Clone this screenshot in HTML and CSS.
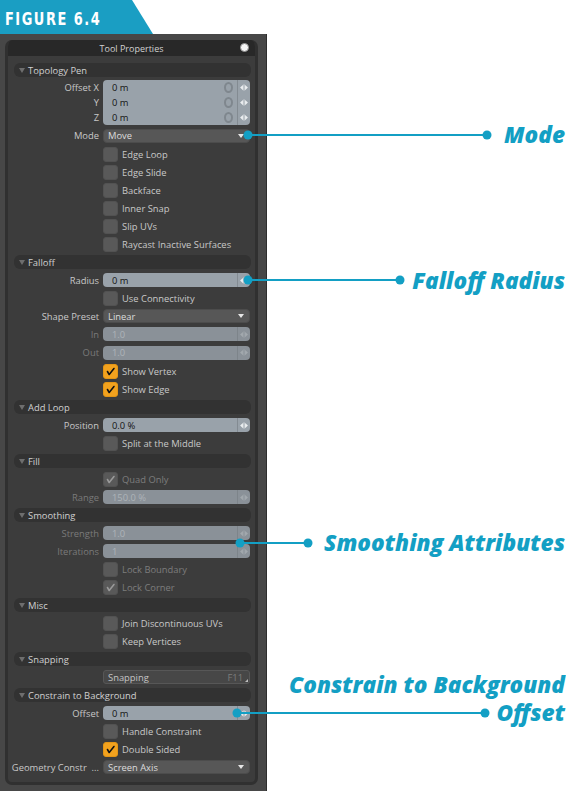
FILE: index.html
```html
<!DOCTYPE html>
<html>
<head>
<meta charset="utf-8">
<title>Figure 6.4 - Tool Properties</title>
<link rel="stylesheet" href="styles.css">
</head>
<body>
<div class="page">
  <div class="col">
    <div class="banner"><span class="fig">FIGURE 6.4</span></div>
    <div class="frame">
      <div class="panel">
        <div class="ph"><span class="ph-title">Tool Properties</span><span class="ph-btn"></span></div>
        <div class="pb">

          <div class="sec"><div class="bar"><i class="tri"></i>Topology Pen</div></div>
          <div class="group">
            <div class="glabels"><div>Offset X</div><div>Y</div><div>Z</div></div>
            <div class="gfield">
              <div class="gline"><span class="val">0 m</span><i class="reset"></i><span class="spin"><svg viewBox="0 0 9 8"><path d="M0 4L3.3 1V7Z M5.7 1L9 4L5.7 7Z"/><rect x="4" y="0.5" width="1" height="7"/></svg></span></div>
              <div class="gline"><span class="val">0 m</span><i class="reset"></i><span class="spin"><svg viewBox="0 0 9 8"><path d="M0 4L3.3 1V7Z M5.7 1L9 4L5.7 7Z"/><rect x="4" y="0.5" width="1" height="7"/></svg></span></div>
              <div class="gline"><span class="val">0 m</span><i class="reset"></i><span class="spin"><svg viewBox="0 0 9 8"><path d="M0 4L3.3 1V7Z M5.7 1L9 4L5.7 7Z"/><rect x="4" y="0.5" width="1" height="7"/></svg></span></div>
            </div>
          </div>
          <div class="row tall"><div class="lbl">Mode</div><div class="fld drop"><span class="dval">Move</span><i class="darr"></i></div></div>
          <div class="row"><div class="lbl"></div><div class="chk"><i class="box"></i>Edge Loop</div></div>
          <div class="row"><div class="lbl"></div><div class="chk"><i class="box"></i>Edge Slide</div></div>
          <div class="row"><div class="lbl"></div><div class="chk"><i class="box"></i>Backface</div></div>
          <div class="row"><div class="lbl"></div><div class="chk"><i class="box"></i>Inner Snap</div></div>
          <div class="row"><div class="lbl"></div><div class="chk"><i class="box"></i>Slip UVs</div></div>
          <div class="row"><div class="lbl"></div><div class="chk"><i class="box"></i>Raycast Inactive Surfaces</div></div>

          <div class="sec"><div class="bar"><i class="tri"></i>Falloff</div></div>
          <div class="row"><div class="lbl">Radius</div><div class="fld num"><span class="val">0 m</span><span class="spin"><svg viewBox="0 0 9 8"><path d="M0 4L3.3 1V7Z M5.7 1L9 4L5.7 7Z"/><rect x="4" y="0.5" width="1" height="7"/></svg></span></div></div>
          <div class="row"><div class="lbl"></div><div class="chk"><i class="box"></i>Use Connectivity</div></div>
          <div class="row"><div class="lbl">Shape Preset</div><div class="fld drop"><span class="dval">Linear</span><i class="darr"></i></div></div>
          <div class="row off"><div class="lbl">In</div><div class="fld num"><span class="val">1.0</span><span class="spin"><svg viewBox="0 0 9 8"><path d="M0 4L3.3 1V7Z M5.7 1L9 4L5.7 7Z"/><rect x="4" y="0.5" width="1" height="7"/></svg></span></div></div>
          <div class="row off tall"><div class="lbl">Out</div><div class="fld num"><span class="val">1.0</span><span class="spin"><svg viewBox="0 0 9 8"><path d="M0 4L3.3 1V7Z M5.7 1L9 4L5.7 7Z"/><rect x="4" y="0.5" width="1" height="7"/></svg></span></div></div>
          <div class="row"><div class="lbl"></div><div class="chk"><i class="box on"><svg viewBox="0 0 15 15"><path d="M4 7.5L6 11L11.5 4"/></svg></i>Show Vertex</div></div>
          <div class="row"><div class="lbl"></div><div class="chk"><i class="box on"><svg viewBox="0 0 15 15"><path d="M4 7.5L6 11L11.5 4"/></svg></i>Show Edge</div></div>

          <div class="sec"><div class="bar"><i class="tri"></i>Add Loop</div></div>
          <div class="row"><div class="lbl">Position</div><div class="fld num"><span class="val">0.0 %</span><span class="spin"><svg viewBox="0 0 9 8"><path d="M0 4L3.3 1V7Z M5.7 1L9 4L5.7 7Z"/><rect x="4" y="0.5" width="1" height="7"/></svg></span></div></div>
          <div class="row"><div class="lbl"></div><div class="chk"><i class="box"></i>Split at the Middle</div></div>

          <div class="sec"><div class="bar"><i class="tri"></i>Fill</div></div>
          <div class="row off"><div class="lbl"></div><div class="chk"><i class="box dim"><svg viewBox="0 0 15 15"><path d="M4 7.5L6 11L11.5 4"/></svg></i>Quad Only</div></div>
          <div class="row off"><div class="lbl">Range</div><div class="fld num"><span class="val">150.0 %</span><span class="spin"><svg viewBox="0 0 9 8"><path d="M0 4L3.3 1V7Z M5.7 1L9 4L5.7 7Z"/><rect x="4" y="0.5" width="1" height="7"/></svg></span></div></div>

          <div class="sec"><div class="bar"><i class="tri"></i>Smoothing</div></div>
          <div class="row off"><div class="lbl">Strength</div><div class="fld num"><span class="val">1.0</span><span class="spin"><svg viewBox="0 0 9 8"><path d="M0 4L3.3 1V7Z M5.7 1L9 4L5.7 7Z"/><rect x="4" y="0.5" width="1" height="7"/></svg></span></div></div>
          <div class="row off"><div class="lbl">Iterations</div><div class="fld num"><span class="val">1</span><span class="spin"><svg viewBox="0 0 9 8"><path d="M0 4L3.3 1V7Z M5.7 1L9 4L5.7 7Z"/><rect x="4" y="0.5" width="1" height="7"/></svg></span></div></div>
          <div class="row off"><div class="lbl"></div><div class="chk"><i class="box"></i>Lock Boundary</div></div>
          <div class="row off"><div class="lbl"></div><div class="chk"><i class="box dim"><svg viewBox="0 0 15 15"><path d="M4 7.5L6 11L11.5 4"/></svg></i>Lock Corner</div></div>

          <div class="sec"><div class="bar"><i class="tri"></i>Misc</div></div>
          <div class="row"><div class="lbl"></div><div class="chk"><i class="box"></i>Join Discontinuous UVs</div></div>
          <div class="row"><div class="lbl"></div><div class="chk"><i class="box"></i>Keep Vertices</div></div>

          <div class="sec"><div class="bar"><i class="tri"></i>Snapping</div></div>
          <div class="row"><div class="lbl"></div><div class="fld btn"><span class="dval">Snapping</span><span class="key">F11</span><i class="corner"></i></div></div>

          <div class="sec"><div class="bar"><i class="tri"></i>Constrain to Background</div></div>
          <div class="row"><div class="lbl">Offset</div><div class="fld num"><span class="val">0 m</span><span class="spin"><svg viewBox="0 0 9 8"><path d="M0 4L3.3 1V7Z M5.7 1L9 4L5.7 7Z"/><rect x="4" y="0.5" width="1" height="7"/></svg></span></div></div>
          <div class="row"><div class="lbl"></div><div class="chk"><i class="box"></i>Handle Constraint</div></div>
          <div class="row"><div class="lbl"></div><div class="chk"><i class="box on"><svg viewBox="0 0 15 15"><path d="M4 7.5L6 11L11.5 4"/></svg></i>Double Sided</div></div>
          <div class="row"><div class="lbl">Geometry Constr&nbsp; ...</div><div class="fld drop"><span class="dval">Screen Axis</span><i class="darr"></i></div></div>

        </div>
      </div>
    </div>
  </div>

  <svg class="callouts" viewBox="0 0 566 791">
    <g class="cl">
      <line x1="248" y1="135" x2="487" y2="135"/>
      <circle cx="248" cy="135" r="4.5"/>
      <circle cx="487" cy="135" r="4.5"/>
      <line x1="248" y1="280" x2="400" y2="280"/>
      <circle cx="248" cy="280" r="4.5"/>
      <circle cx="400" cy="280" r="4.5"/>
      <line x1="240" y1="543" x2="308" y2="543"/>
      <circle cx="240" cy="543" r="4.5"/>
      <circle cx="308" cy="543" r="4.5"/>
      <line x1="237" y1="713" x2="485" y2="713"/>
      <circle cx="237" cy="713" r="4.5"/>
      <circle cx="485" cy="713" r="4.5"/>
    </g>
  </svg>
  <div class="note n-mode">Mode</div>
  <div class="note n-falloff">Falloff Radius</div>
  <div class="note n-smooth">Smoothing Attributes</div>
  <div class="note n-constrain">Constrain to Background</div>
  <div class="note n-offset">Offset</div>
</div>
</body>
</html>
```

FILE: styles.css
```css
html, body {
  margin: 0;
  padding: 0;
  background: #ffffff;
}

.page {
  position: relative;
  width: 566px;
  height: 791px;
  overflow: hidden;
  font-family: "Open Sans", "Noto Sans", sans-serif;
}

.col {
  width: 267px;
  display: flex;
  flex-direction: column;
}

/* banner */
.banner {
  width: 153px;
  height: 34px;
  background: #1a9ec3;
  clip-path: polygon(0 0, 132px 0, 153px 34px, 0 34px);
  display: flex;
  align-items: center;
}
.fig {
  display: inline-block;
  margin-left: 5px;
  margin-top: 3px;
  color: #ffffff;
  font-family: "DejaVu Sans Condensed", "DejaVu Sans", sans-serif;
  font-weight: bold;
  font-size: 18px;
  letter-spacing: 1.9px;
  line-height: 20px;
  transform: scaleX(0.8);
  transform-origin: left center;
}

/* frame & panel */
.frame {
  background: #474747;
  height: 757px;
  padding: 6px 8px 0 5px;
  box-sizing: border-box;
  border-right: 1px solid #2e2e2e;
}
.panel {
  border: 3px solid #303030;
  border-top: 0;
  border-radius: 7px;
  overflow: hidden;
  background: #3c3c3c;
}
.ph {
  height: 16px;
  background: #282828;
  display: flex;
  align-items: center;
  justify-content: center;
  position: relative;
  margin: 0 -3px;
}
.ph-title {
  color: #d2d2d2;
  font-size: 9px;
}
.ph-btn {
  position: absolute;
  right: 9px;
  top: 3px;
  width: 7px;
  height: 7px;
  border-radius: 50%;
  background: #f6f6f6;
  border: 1.5px solid #8f8f8f;
}
.pb {
  padding: 5px 0 6px 0;
  font-size: 9.4px;
  color: #c8c8c8;
}

/* section header bar */
.sec {
  height: 18px;
  display: flex;
  align-items: center;
  padding: 0 4px 0 6px;
}
.bar {
  flex: 1;
  height: 14px;
  border-radius: 6px;
  background: #323232;
  display: flex;
  align-items: center;
  color: #d0d0d0;
}
.tri {
  width: 0;
  height: 0;
  margin: 0 3px 0 5px;
  border-left: 3px solid transparent;
  border-right: 3px solid transparent;
  border-top: 5px solid #6e6e6e;
}

/* rows */
.row {
  height: 18px;
  display: flex;
  align-items: center;
}
.row.tall {
  height: 19px;
}
.lbl {
  width: 95px;
  flex: none;
  padding-right: 4px;
  box-sizing: border-box;
  display: flex;
  justify-content: flex-end;
  white-space: nowrap;
}
.fld {
  width: 147px;
  height: 14px;
  border-radius: 4px;
  box-sizing: border-box;
  display: flex;
  align-items: center;
  position: relative;
}
.num {
  background: #99a2aa;
  color: #141414;
}
.val {
  flex: 1;
  padding-left: 9px;
}
.spin {
  width: 12px;
  height: 100%;
  border-left: 1px solid #838b92;
  display: flex;
  align-items: center;
  justify-content: center;
  color: #eceff1;
}
.spin svg {
  width: 8px;
  height: 7px;
  fill: currentColor;
}
.drop {
  background: #575757;
  color: #dcdcdc;
  border: 1px solid #4c4c4c;
}
.dval {
  flex: 1;
  padding-left: 4px;
}
.darr {
  width: 0;
  height: 0;
  margin-right: 5px;
  border-left: 3.5px solid transparent;
  border-right: 3.5px solid transparent;
  border-top: 4px solid #e6e6e6;
}
.btn {
  background: #474747;
  border: 1px solid #575757;
  color: #c4c4c4;
  border-radius: 3px;
}
.key {
  color: #7c7c7c;
  margin-right: 6px;
}
.corner {
  position: absolute;
  right: 1px;
  bottom: 1px;
  width: 0;
  height: 0;
  border-left: 3px solid transparent;
  border-bottom: 3px solid #bdbdbd;
}

/* disabled rows */
.off .lbl { color: #7a7a7a; }
.off .chk { color: #7c7c7c; }
.off .num { background: #8a9198; color: #aeb4b9; }
.off .spin { color: #a3a9ae; border-left-color: #7d848a; }

/* grouped vector fields */
.group {
  display: flex;
  margin: 1px 0 1px;
}
.glabels {
  width: 95px;
  padding-right: 4px;
  box-sizing: border-box;
  text-align: right;
}
.glabels div {
  height: 15px;
  line-height: 15px;
}
.gfield {
  width: 147px;
  border-radius: 4px;
  background: #99a2aa;
  color: #141414;
  overflow: hidden;
}
.gline {
  height: 15px;
  display: flex;
  align-items: center;
}
.reset {
  width: 5px;
  height: 7px;
  border: 2px solid #7f878e;
  border-radius: 50%;
  margin-right: 4px;
}

/* checkboxes */
.chk {
  display: flex;
  align-items: center;
  gap: 4px;
}
.box {
  width: 15px;
  height: 15px;
  border-radius: 3px;
  background: #595959;
  box-sizing: border-box;
  border: 1px solid #525252;
  display: flex;
}
.box svg {
  width: 100%;
  height: 100%;
  fill: none;
  stroke-width: 1.8;
  stroke-linecap: round;
  stroke-linejoin: round;
}
.box.on {
  background: #f2a21e;
  border-color: #e39515;
}
.box.on svg { stroke: #111111; }
.box.dim svg { stroke: #9a9a9a; }

/* callouts */
.callouts {
  position: absolute;
  left: 0;
  top: 0;
  width: 566px;
  height: 791px;
  pointer-events: none;
}
.cl line {
  stroke: #139fc4;
  stroke-width: 2;
}
.cl circle {
  fill: #139fc4;
}
.note {
  position: absolute;
  right: 1px;
  height: 28px;
  line-height: 28px;
  color: #139fc4;
  font-family: "Open Sans", sans-serif;
  font-weight: 800;
  font-style: italic;
  font-size: 22.6px;
  white-space: nowrap;
}
.n-mode { top: 121px; }
.n-falloff { top: 267px; }
.n-smooth { top: 529px; }
.n-constrain { top: 671px; }
.n-offset { top: 699px; }
```
